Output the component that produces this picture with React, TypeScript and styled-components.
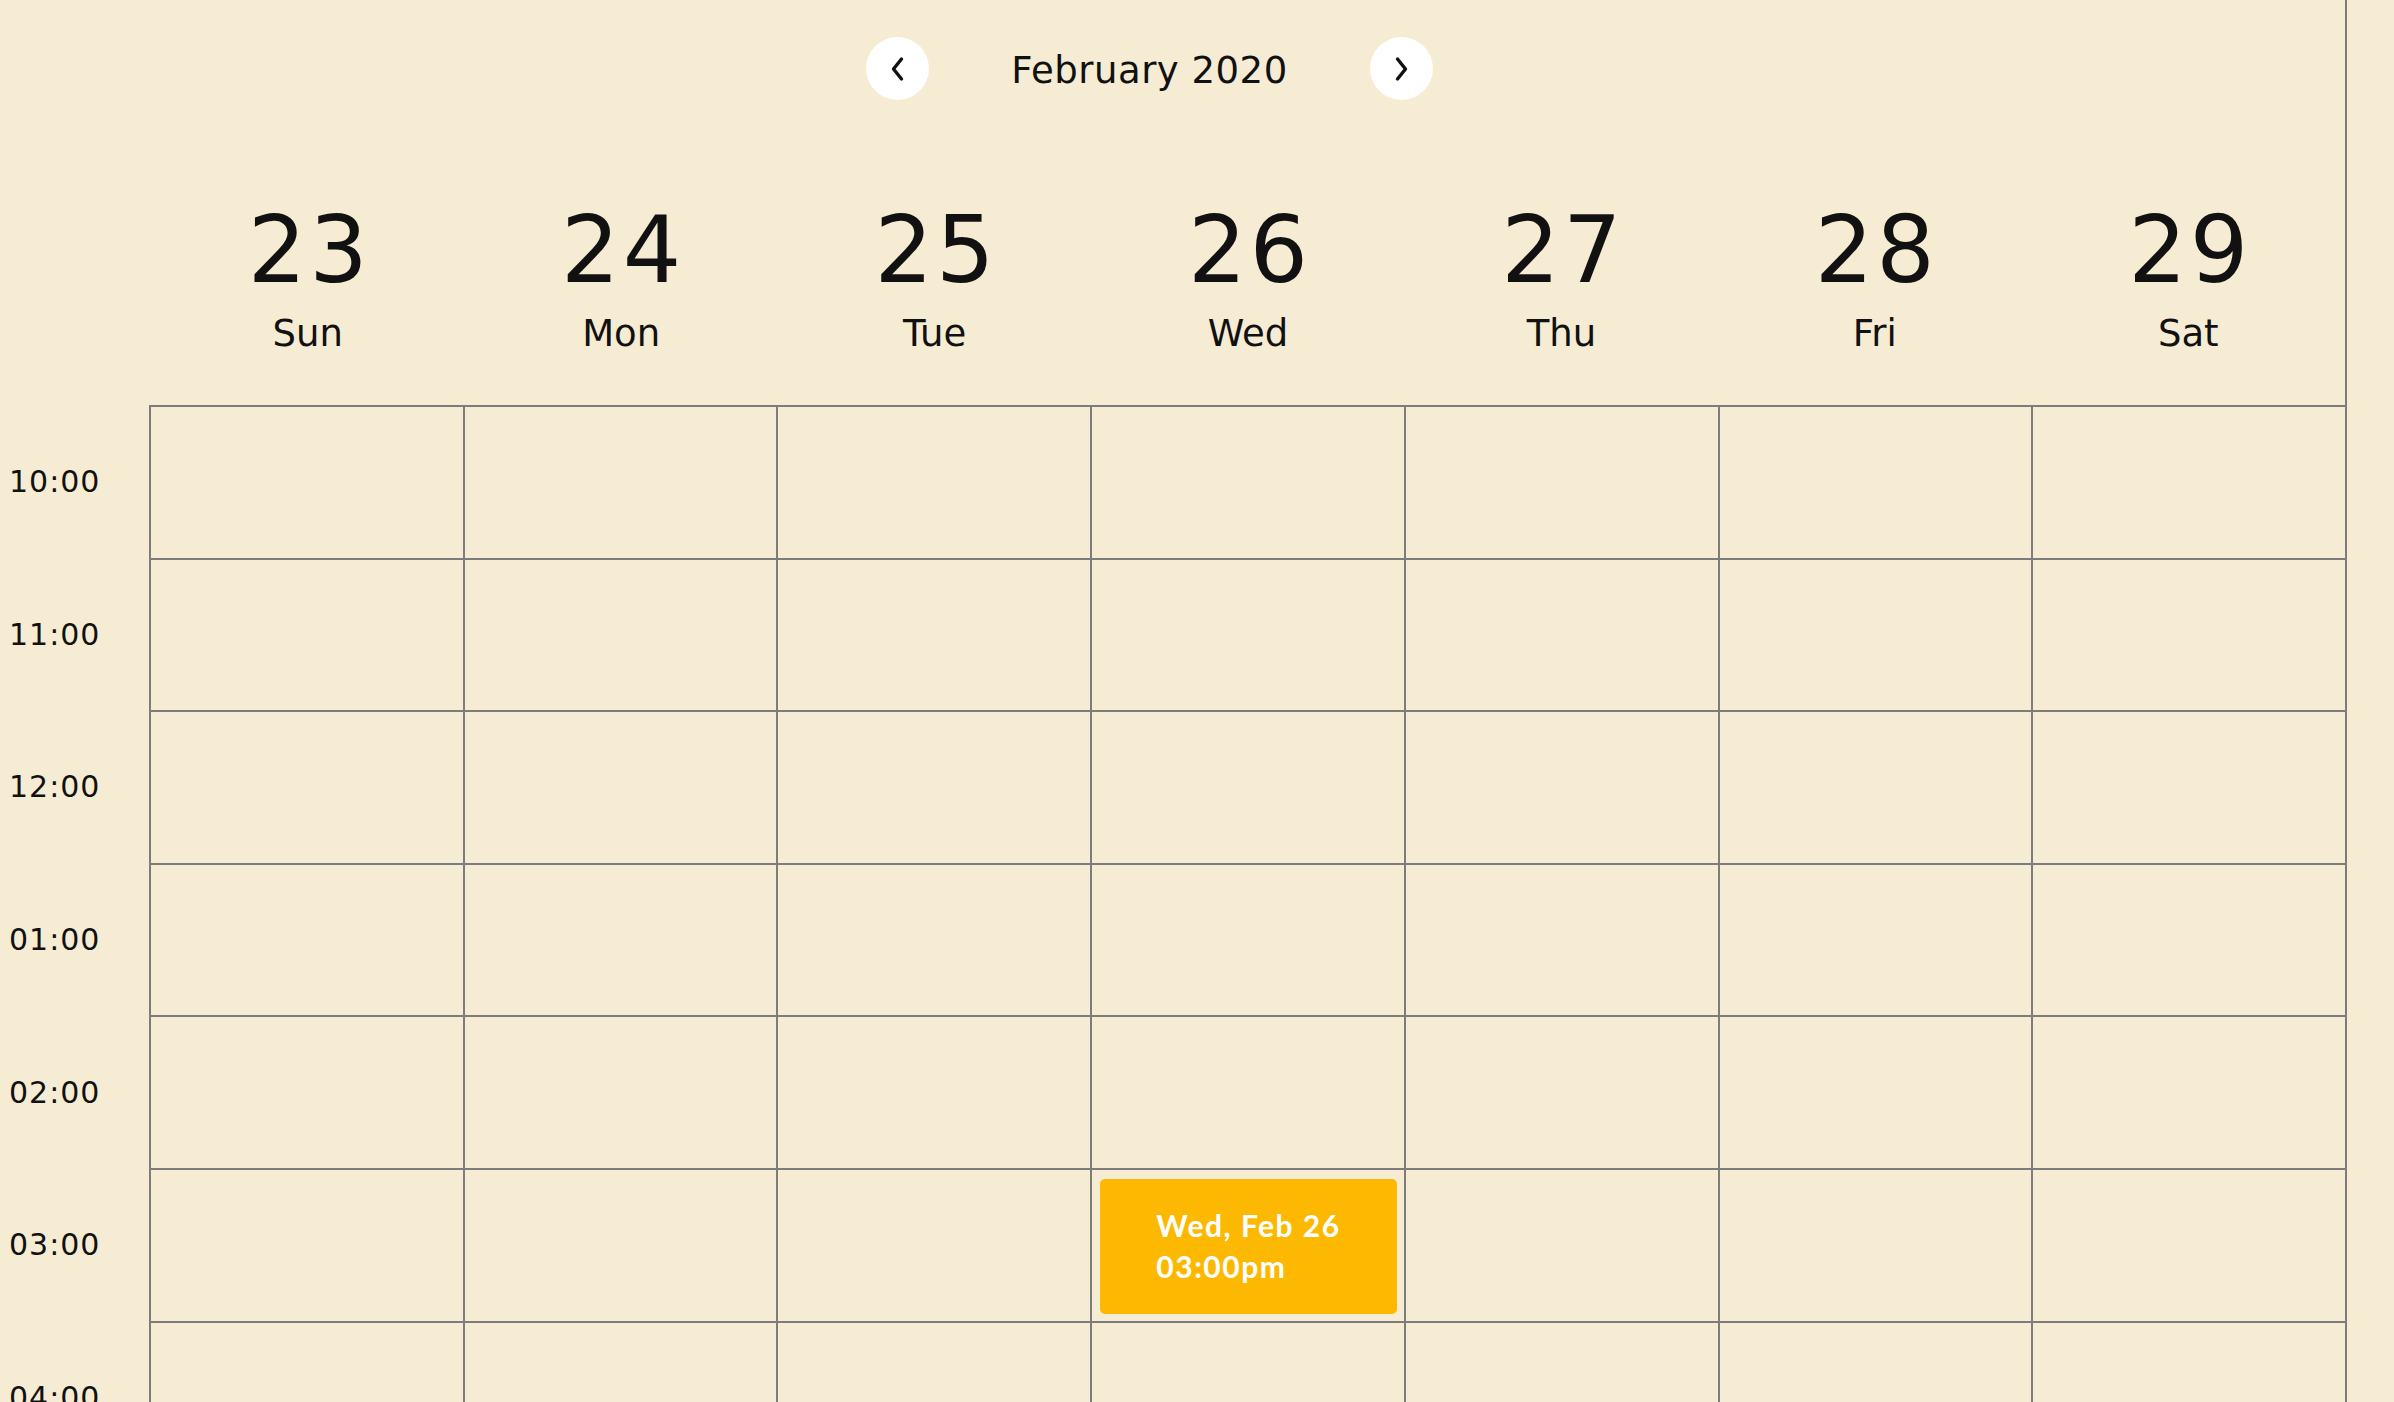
import styled, { createGlobalStyle } from "styled-components";

const GlobalStyle = createGlobalStyle`
  html, body {
    margin: 0;
    padding: 0;
    background: #f6ecd3;
  }
  body {
    font-family: "DejaVu Sans", "Liberation Sans", sans-serif;
    color: #111;
  }
`;

const LINE = "#7c7c7c";
const ROW_HEIGHT = 152.6;

const Page = styled.div`
  width: 2345px;
  height: 100vh;
  overflow: hidden;
  border-right: 2px solid ${LINE};
`;

const Nav = styled.div`
  display: flex;
  justify-content: center;
  align-items: center;
  gap: 82px;
  padding: 37px 46px 0 0;
`;

const NavButton = styled.button`
  width: 63px;
  height: 63px;
  border: none;
  border-radius: 50%;
  background: #fff;
  display: flex;
  align-items: center;
  justify-content: center;
  padding: 0;
  cursor: pointer;
`;

const MonthTitle = styled.div`
  font-size: 37px;
  line-height: 1;
  margin-top: 3px;
  letter-spacing: 0.5px;
`;

const DayHeader = styled.div`
  display: flex;
  padding: 105px 0 53px 151px;
`;

const DayCol = styled.div`
  flex: 1;
  display: flex;
  flex-direction: column;
  align-items: center;
`;

const DayNum = styled.div`
  font-size: 92px;
  line-height: 1;
  letter-spacing: 3px;
  padding-left: 3px;
`;

const DayName = styled.div`
  font-size: 37px;
  line-height: 1;
  margin-top: 18px;
`;

const Schedule = styled.div`
  display: flex;
`;

const TimeColumn = styled.div`
  width: 149px;
  padding-top: 2px;
`;

const TimeLabel = styled.div`
  height: ${ROW_HEIGHT}px;
  display: flex;
  align-items: center;
  padding-left: 9px;
  font-size: 30px;
  line-height: 1;
  letter-spacing: 1px;
  box-sizing: border-box;
  padding-bottom: 2px;
`;

const Board = styled.div`
  flex: 1;
  border-left: 2px solid ${LINE};
  border-top: 2px solid ${LINE};
`;

const BoardRow = styled.div`
  display: flex;
  height: ${ROW_HEIGHT}px;
  box-sizing: border-box;
  border-bottom: 2px solid ${LINE};
`;

const Cell = styled.div`
  flex: 1;
  position: relative;
  border-right: 2px solid ${LINE};

  &:last-child {
    border-right: none;
  }
`;

const Event = styled.div`
  position: absolute;
  top: 9px;
  left: 8px;
  right: 7px;
  bottom: 7px;
  border-radius: 5px;
  background: #fdb902;
  color: #fff;
  display: flex;
  align-items: center;
  justify-content: center;
`;

const EventText = styled.div`
  font-family: "Lato", "DejaVu Sans", sans-serif;
  font-weight: 700;
  font-size: 30px;
  line-height: 41px;
  letter-spacing: 1.5px;
`;

const Chevron = ({ dir }: { dir: "left" | "right" }) => (
  <svg width="16" height="26" viewBox="0 0 16 26" fill="none">
    <polyline
      points={dir === "left" ? "11.5,3 3.5,13 11.5,23" : "4.5,3 12.5,13 4.5,23"}
      stroke="#111"
      strokeWidth="3.4"
      strokeLinecap="round"
      strokeLinejoin="round"
    />
  </svg>
);

const days = [
  { num: 23, name: "Sun" },
  { num: 24, name: "Mon" },
  { num: 25, name: "Tue" },
  { num: 26, name: "Wed" },
  { num: 27, name: "Thu" },
  { num: 28, name: "Fri" },
  { num: 29, name: "Sat" },
];

const hours = ["10:00", "11:00", "12:00", "01:00", "02:00", "03:00", "04:00"];

export default function App() {
  return (
    <>
      <GlobalStyle />
      <Page>
        <Nav>
          <NavButton aria-label="Previous week">
            <Chevron dir="left" />
          </NavButton>
          <MonthTitle>February 2020</MonthTitle>
          <NavButton aria-label="Next week">
            <Chevron dir="right" />
          </NavButton>
        </Nav>
        <DayHeader>
          {days.map((d) => (
            <DayCol key={d.num}>
              <DayNum>{d.num}</DayNum>
              <DayName>{d.name}</DayName>
            </DayCol>
          ))}
        </DayHeader>
        <Schedule>
          <TimeColumn>
            {hours.map((h) => (
              <TimeLabel key={h}>{h}</TimeLabel>
            ))}
          </TimeColumn>
          <Board>
            {hours.map((h) => (
              <BoardRow key={h}>
                {days.map((d) => (
                  <Cell key={d.num}>
                    {h === "03:00" && d.name === "Wed" && (
                      <Event>
                        <EventText>
                          Wed, Feb 26
                          <br />
                          03:00pm
                        </EventText>
                      </Event>
                    )}
                  </Cell>
                ))}
              </BoardRow>
            ))}
          </Board>
        </Schedule>
      </Page>
    </>
  );
}
